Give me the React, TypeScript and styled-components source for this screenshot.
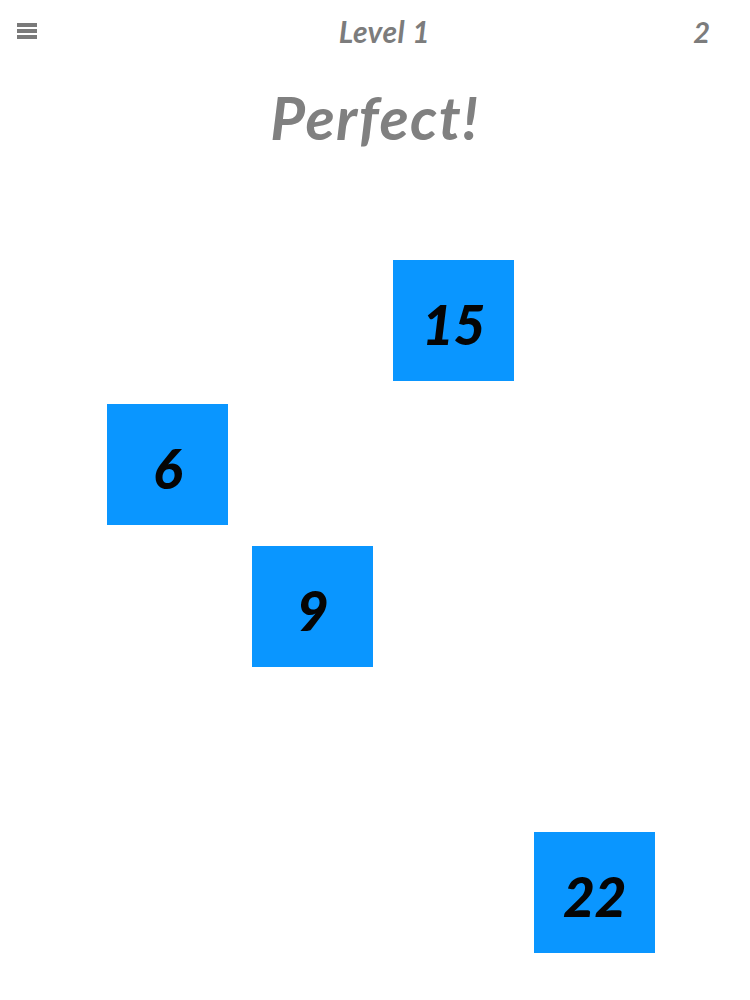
import styled, { createGlobalStyle } from "styled-components";

const GlobalStyle = createGlobalStyle`
  html, body {
    margin: 0;
    padding: 0;
    background: #ffffff;
  }
  body {
    font-family: Lato, "Open Sans", sans-serif;
  }
`;

const Screen = styled.div`
  width: 750px;
  height: 1000px;
  display: flex;
  flex-direction: column;
  overflow: hidden;
`;

const TopBar = styled.header`
  display: grid;
  grid-template-columns: 1fr auto 1fr;
  align-items: center;
  height: 62px;
  padding: 0 40px 0 17px;
`;

const MenuButton = styled.button`
  justify-self: start;
  display: flex;
  flex-direction: column;
  gap: 2px;
  width: 20px;
  padding: 0;
  border: none;
  background: none;
  span {
    display: block;
    height: 4px;
    background: #7a7a7a;
  }
`;

const LevelLabel = styled.div`
  margin-left: 42px;
  font-size: 30px;
  font-style: italic;
  font-weight: 700;
  color: #7c7c7c;
  letter-spacing: 0.5px;
`;

const Score = styled.div`
  justify-self: end;
  font-size: 29px;
  font-style: italic;
  font-weight: 700;
  color: #7c7c7c;
`;

const Title = styled.h1`
  margin: 19px 0 0;
  text-align: center;
  font-size: 60px;
  font-style: italic;
  font-weight: 700;
  color: #808080;
  letter-spacing: 1.5px;
  line-height: 72px;
`;

const Board = styled.div`
  position: relative;
  flex: 1;
`;

const Tile = styled.div`
  position: absolute;
  width: 121px;
  height: 121px;
  padding-top: 6px;
  box-sizing: border-box;
  background: #0a96ff;
  display: flex;
  align-items: center;
  justify-content: center;
  font-size: 55px;
  font-style: italic;
  font-weight: 900;
  color: #050505;
  letter-spacing: -0.5px;
`;

interface ITile {
  value: number;
  x: number;
  y: number;
}

const tiles: ITile[] = [
  { value: 15, x: 393, y: 260 },
  { value: 6, x: 107, y: 404 },
  { value: 9, x: 252, y: 546 },
  { value: 22, x: 534, y: 832 },
];

// board starts below header + title
const BOARD_TOP = 153;

function App() {
  return (
    <>
      <GlobalStyle />
      <Screen>
        <TopBar>
          <MenuButton aria-label="menu">
            <span />
            <span />
            <span />
          </MenuButton>
          <LevelLabel>Level 1</LevelLabel>
          <Score>2</Score>
        </TopBar>
        <Title>Perfect!</Title>
        <Board>
          {tiles.map((t) => (
            <Tile key={t.value} style={{ left: t.x, top: t.y - BOARD_TOP }}>
              {t.value}
            </Tile>
          ))}
        </Board>
      </Screen>
    </>
  );
}

export default App;
